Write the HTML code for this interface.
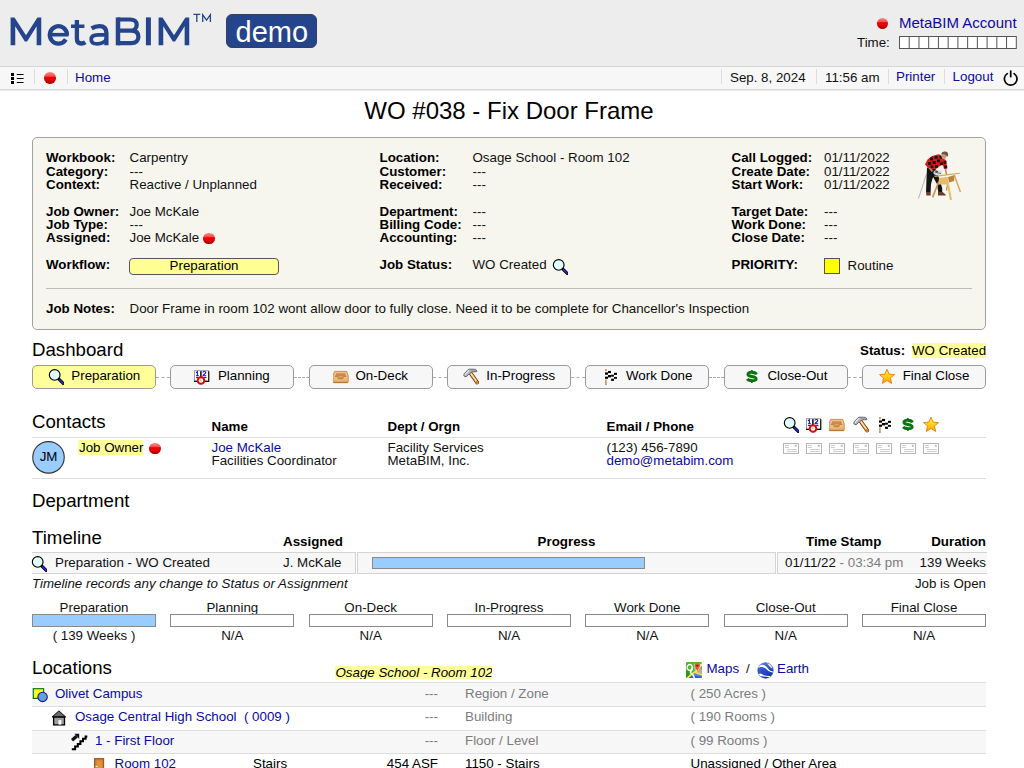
<!DOCTYPE html>
<html>
<head>
<meta charset="utf-8">
<title>WO #038 - Fix Door Frame</title>
<style>
html,body{margin:0;padding:0;background:#fff;}
body{width:1024px;height:768px;overflow:hidden;position:relative;font-family:"Liberation Sans",sans-serif;font-size:13.33px;color:#111;}
.t{position:absolute;white-space:nowrap;line-height:15px;font-size:13.33px;}
.b{font-weight:bold;color:#000;}
.a{color:#0a0aa2;}
.g{color:#7c7c7c;}
.h{position:absolute;white-space:nowrap;line-height:22px;font-size:18.67px;color:#000;left:32px;}
.abs{position:absolute;}
.ball{position:absolute;width:11.6px;height:11.6px;border-radius:50%;background:linear-gradient(#f78a8a 0%,#f74a4a 36%,#f20000 42%,#dd0000 65%,#a80000 100%);}
.sep{position:absolute;width:1px;height:15px;top:69px;background:#dcdcdc;}
.hl{background:#ffff99;}
.btn{position:absolute;top:365px;width:122px;height:22px;border:1px solid #9a9a9a;border-radius:5px;background:#f7f7f7;display:flex;align-items:center;justify-content:center;font-size:13.33px;line-height:15px;color:#000;}
.btn svg{margin-right:8.5px;flex:none;}
.btn span{position:relative;top:-2px;}
.dash{position:absolute;top:377px;height:0;border-top:1px dashed #aaa;}
.bar{position:absolute;top:614px;width:122px;height:11px;border:1px solid #8a8a8a;background:#fff;}
.ctr{position:absolute;white-space:nowrap;line-height:15px;font-size:13.33px;width:124px;text-align:center;}
.ln{position:absolute;left:32px;width:954px;height:1px;background:#ddd;}
</style>
</head>
<body>
<svg width="0" height="0" style="position:absolute">
<defs>
<linearGradient id="gPole" gradientUnits="userSpaceOnUse" x1="0" y1="11.3" x2="0" y2="16.9"><stop offset="0" stop-color="#eaa060"/><stop offset=".4" stop-color="#c8a078"/><stop offset="1" stop-color="#a8a098"/></linearGradient>
<linearGradient id="gStar" x1="0" y1="0" x2="0" y2="1"><stop offset="0" stop-color="#fff23a"/><stop offset=".5" stop-color="#ffd21a"/><stop offset="1" stop-color="#ff9a10"/></linearGradient>
<linearGradient id="gTray" x1="0" y1="0" x2="0" y2="1"><stop offset="0" stop-color="#ecb878"/><stop offset=".2" stop-color="#f3c88e"/><stop offset=".55" stop-color="#efc086"/><stop offset="1" stop-color="#e2a866"/></linearGradient>
<linearGradient id="gHandle" gradientUnits="userSpaceOnUse" x1="10.04" y1="10.9" x2="12.16" y2="9.4"><stop offset="0" stop-color="#e88c24"/><stop offset=".5" stop-color="#fff0c4"/><stop offset="1" stop-color="#ee9a30"/></linearGradient>
<linearGradient id="gEarth" x1="0.3" y1="0" x2="0.7" y2="1"><stop offset="0" stop-color="#5a78dc"/><stop offset=".45" stop-color="#2c50cc"/><stop offset="1" stop-color="#142ca4"/></linearGradient>
<symbol id="i-mag" viewBox="0 0 16 17"><g transform="translate(0 0.4)"><path d="M10.9 10.7L15.2 15" stroke="#000" stroke-width="3" stroke-linecap="round"/><path d="M11.6 11.4L15.1 14.9" stroke="#2a2aff" stroke-width="1.3" stroke-linecap="round"/><circle cx="6.7" cy="6.5" r="5.35" fill="#e2ffff" stroke="#000" stroke-width="1.15"/></g></symbol>
<symbol id="i-plan" viewBox="0 0 16 17"><g transform="translate(0 1.2)"><rect x="0.5" y="1.5" width="6" height="10.5" fill="#fff" stroke="#9a9a9a" stroke-width="1"/><rect x="7.5" y="1.5" width="7" height="10.5" fill="#fff" stroke="#9a9a9a" stroke-width="1"/><path d="M0 12.2H15M6.8 2V12.5M14.8 2V12.5" stroke="#000" stroke-width="1.1" fill="none"/><path d="M2 3.6L3.4 2.4V6.6M2 6.6H4.9" stroke="#1010ff" stroke-width="1.1" fill="none"/><path d="M9 3.4C9 2 11.8 2 11.8 3.4C11.8 4.6 9 5.4 9 6.6H12.2" stroke="#1010ff" stroke-width="1.1" fill="none"/><path d="M2 8.4H5M9.5 8.4H12.5" stroke="#222" stroke-width="1" fill="none"/><circle cx="7" cy="11.3" r="3.3" fill="#fff" stroke="#e60000" stroke-width="1.9"/><path d="M7 11.6L6 10.2" stroke="#888" stroke-width="1" fill="none"/></g></symbol>
<symbol id="i-tray" viewBox="0 0 16 17"><g transform="translate(0 0.5)"><path d="M1.5 2.9H13.7L15.2 7.3V13.3C15.2 13.9 14.8 14.2 14.2 14.2H1C0.4 14.2 0 13.9 0 13.3V7.3Z" fill="url(#gTray)" stroke="#c58a48" stroke-width="0.9"/><path d="M0.3 13.9H14.9" stroke="#b06e2c" stroke-width="0.9"/><path d="M3 4.7H12.2L13 7.8H2.2Z" fill="#c48c54"/><path d="M4.6 7.8L5.5 10H9.7L10.6 7.8Z" fill="#d09a60"/><path d="M1.8 7.9H4.5L5.4 10.1H9.8L10.7 7.9H13.4" fill="none" stroke="#b87830" stroke-width="0.9"/></g></symbol>
<symbol id="i-ham" viewBox="0 0 16 17"><path d="M7.9 5.6L14.1 14.4" stroke="#5c2e0a" stroke-width="3.8" stroke-linecap="round"/><path d="M8 5.8L14.1 14.4" stroke="url(#gHandle)" stroke-width="2.5" stroke-linecap="round"/><circle cx="14" cy="14.3" r="1.25" fill="#e6761a"/><path d="M0.8 7.4L1.1 5.7L4.5 2.3L5.95 1.15L12.5 1.3L14 3.2L13.7 3.75H9.1L7.95 4.7L6.25 6.3L5.1 6.6L3.65 8.6L1.8 8.7Z" fill="#b4b4b9" stroke="#4c4c50" stroke-width="0.8" stroke-linejoin="round"/><path d="M1.9 6.7L5 3.4L6.4 2.3" stroke="#ececf2" stroke-width="1.1" fill="none"/><path d="M6.5 2H12" stroke="#8a8a90" stroke-width="0.8" fill="none"/></symbol>
<symbol id="i-flag" viewBox="0 0 16 17"><path d="M3.92 0.9V3.4" stroke="#c9a070" stroke-width="1.8"/><path d="M3.92 11.3V16.9" stroke="url(#gPole)" stroke-width="1.8"/><path d="M3 3.6L6 3.2V1.9H9V3.6L12 3.8H15V13.3H9.1V11.7H6V11H3Z" fill="#fff"/><g fill="#000"><rect x="3.00" y="4.40" width="3.00" height="2.30"/><rect x="3.00" y="8.65" width="3.00" height="2.15"/><rect x="6.00" y="2.90" width="3.00" height="2.20"/><rect x="6.00" y="7.00" width="3.00" height="2.40"/><rect x="9.10" y="6.70" width="2.80" height="2.00"/><rect x="9.10" y="10.70" width="2.80" height="2.20"/><rect x="12.00" y="4.80" width="2.95" height="2.10"/><rect x="12.00" y="8.90" width="2.95" height="1.90"/></g></symbol>
<symbol id="i-dol" viewBox="0 0 16 17"><g transform="translate(-0.3 0) scale(0.95 1)"><path d="M8.6 1.9V3.4M8.6 13.5V15" stroke="#148018" stroke-width="1.8" fill="none"/><path d="M13.3 6.5C12.8 5 11 4.4 8.6 4.4C6.1 4.4 4.5 5.2 4.5 6.5C4.5 7.7 5.7 8.1 8.6 8.5C11.9 9 13.1 9.7 13.1 10.9C13.1 12 11.3 12.5 8.6 12.5C6.3 12.5 4.5 11.9 3.7 10.8" stroke="#0f7212" stroke-width="3.1" fill="none"/><path d="M6 6.3C6.6 5.6 7.6 5.5 8.6 5.5M8.4 11.4C10 11.5 11.4 11.3 11.8 10.8" stroke="#36b836" stroke-width="0.9" fill="none"/></g></symbol>
<symbol id="i-star" viewBox="0 0 16 17"><g transform="translate(0 0.5)"><path d="M8 0.7L10.1 5.6L15.5 6.1L11.4 9.6L12.7 14.9L8 12.1L3.3 14.9L4.6 9.6L0.5 6.1L5.9 5.6Z" fill="url(#gStar)" stroke="#f37c0a" stroke-width="0.9" stroke-linejoin="round"/></g></symbol>
<symbol id="i-env" viewBox="0 0 16 11"><rect x="0.5" y="0.5" width="15" height="10" fill="#fff" stroke="#b6b6b6" stroke-width="1"/><path d="M1.9 2.5H5.9M1.9 4.5H5.9M4 6.5H13.8M4 8.5H13.8" stroke="#c2c2c2" stroke-width="0.8" fill="none"/><rect x="11.8" y="1.8" width="2" height="2" fill="#ecaaaa"/></symbol>
<symbol id="i-campus" viewBox="0 0 17 16"><rect x="1.3" y="1.7" width="10.3" height="9.7" fill="#ffff1a" stroke="#0a7a0a" stroke-width="1.2"/><circle cx="10.6" cy="9.9" r="4.7" fill="#6a9fd4" stroke="#1414b4" stroke-width="1.1"/></symbol>
<symbol id="i-house" viewBox="0 0 16 17"><path d="M7.9 0.9L14.7 7H1.1Z" fill="#6a6a6a" stroke="#000" stroke-width="1" stroke-linejoin="round"/><rect x="2.6" y="7.1" width="10.9" height="7.8" fill="#9c9c9c" stroke="#000" stroke-width="1.3"/><rect x="7.5" y="10.2" width="2.8" height="4.4" fill="#fff"/></symbol>
<symbol id="i-stairs" viewBox="0 0 17 18"><path d="M0.8 16.2H4.1V13.5H6.8V10.9H9.4V8.3H12V5.7H14.6V3.5H16.3" fill="none" stroke="#000" stroke-width="2.05"/><path d="M1 7.2L5.6 3.2" stroke="#111" stroke-width="3.3"/><path d="M3.4 0.8H8.2V5.9Z" fill="#111"/></symbol>
<symbol id="i-door" viewBox="0 0 16 16"><rect x="2.6" y="1.6" width="9" height="15" fill="#d07a2c" stroke="#a5561c" stroke-width="1.1"/><rect x="4.6" y="3.4" width="5.2" height="12" fill="#e2923e"/><rect x="3.6" y="8.8" width="1.7" height="1.3" fill="#fff"/></symbol>
<symbol id="i-maps" viewBox="0 0 16 16"><clipPath id="cMaps"><rect width="16" height="16" rx="1.2"/></clipPath><g clip-path="url(#cMaps)"><rect width="16" height="16" fill="#56b430"/><path d="M0 8.6H3.4V16H0Z" fill="#2e9812"/><path d="M7.6 1.8H16V12.6L9 10.4Z" fill="#9ad868"/><path d="M9.8 10.2L13 6L16 3.2V12.8Z" fill="#c2aa8a"/><path d="M13.6 5.4L16 3.2V8Z" fill="#a08868"/><path d="M8.4 10.3L15.2 1.6L16 2V3.6L9.6 11Z" fill="#eef2a4"/><path d="M3.2 16L8.4 11.2L16 14V16Z" fill="#2c5cd0"/><path d="M6 13.5L8.4 11.2L16 14V14.8Z" fill="#5c88e4"/><path d="M1 16.2L8.4 10.1L16.2 13" stroke="#f2de4c" stroke-width="1.7" fill="none"/><ellipse cx="3.7" cy="5.4" rx="2.5" ry="2.9" fill="#52b42c" stroke="#fff" stroke-width="1.3"/><path d="M6.4 4.6C6.9 7.6 5.9 8.8 4.4 9.9C4.2 11 5.6 11.6 6.6 12.6C7.6 13.6 8.1 15 8.4 16.3" stroke="#fff" stroke-width="1.5" fill="none"/><path d="M11.4 1.3C13 1.3 14 2.5 14 3.8C14 5.3 12.1 6.4 11.3 9.3C10.6 6.4 8.8 5.3 8.8 3.8C8.8 2.5 9.8 1.3 11.4 1.3Z" fill="#e94b40"/><circle cx="11.3" cy="3.6" r="0.9" fill="#6a1410"/></g></symbol>
<symbol id="i-earth" viewBox="0 0 17 17"><clipPath id="cEarth"><circle cx="8.5" cy="8.5" r="7.9"/></clipPath><circle cx="8.5" cy="8.5" r="7.9" fill="url(#gEarth)"/><g clip-path="url(#cEarth)"><path d="M0.5 4.4L1.8 3.65C3.4 2.9 4.6 2.6 5.85 2.7C7 2.9 8 3.4 9 4.3C10.2 5.5 11 6.7 12.1 7.7C13.2 8.7 14.5 9.2 16.5 9.7V10.7C14.5 10.3 12.8 9.8 11.5 9C10.2 8 9.3 6.9 8.35 6.15C7.4 5.4 6.3 5 5.2 4.9C3.8 4.8 2.5 5.1 0.5 5.8Z" fill="#fff"/><path d="M9.9 1.15C11 1.3 12 1.6 12.7 2.1C13.8 3 14.7 4 15.2 5.2L15.5 6.8C14.9 6.2 14.2 5.7 13.35 5.2C12.6 4.3 11.8 3.3 10.85 2.4Z" fill="#f6f2e6" opacity=".92"/><path d="M0.5 11.9L3.65 11.5C4.9 11.9 5.8 12.7 6.8 13.35C9 13.9 11.5 14 14.5 13.9L12.7 15C10.5 15.1 8.5 14.9 6.45 14.6C5 14.5 3.8 14.3 2.7 14L0.5 13.5Z" fill="#fbf8f0"/></g><circle cx="8.5" cy="8.5" r="7.9" fill="none" stroke="#3a54b8" stroke-width="0.5" opacity=".6"/></symbol>
</defs>
</svg>

<!-- HEADER -->
<div class="abs" style="left:0;top:0;width:1024px;height:66px;background:#ededed;"></div>
<div class="abs" style="left:0;top:66px;width:1024px;height:1px;background:#d4d4d4;"></div>
<div class="abs" style="left:0;top:67px;width:1024px;height:22px;background:#f7f7f7;"></div>
<div class="abs" style="left:0;top:89px;width:1024px;height:1px;background:#d6d6d6;"></div><div class="abs" style="left:0;top:90px;width:1024px;height:1px;background:#f0f0f0;"></div>

<!-- logo -->
<svg class="abs" id="logo" style="left:0;top:0" width="220" height="60" viewBox="0 0 220 60">
<g fill="#24448b">
<path id="lgM" d="M10.6 45.3V17.4H14.5L26 35.3L37.4 17.4H41.25V45.3H36.65V26.2L27.1 41.6H24.85L15.25 26.2V45.3Z"/>
<use href="#lgM" x="148"/>
<rect x="71" y="24.5" width="13.4" height="3.5"/>
<rect x="145.9" y="17.4" width="5" height="27.9"/>
</g>
<g fill="none" stroke="#24448b" stroke-width="4.2" stroke-linejoin="miter">
<path d="M67 35A8.6 8.75 0 1 0 65.8 39.4" /><path d="M49.8 34.7H68.6" stroke-width="3.6"/>
<path d="M76.9 19.9V38.8C76.9 42.2 78.7 43.5 81.4 43.5C82.9 43.5 84.2 43.1 85.3 42.3" stroke-width="4.3"/>
<path d="M91.6 28.4C94 26.8 96.8 26.1 99.4 26.1C103.9 26.1 106.4 28.5 106.4 33V45.3" stroke-width="4.3"/>
<path d="M106.4 34.9H98C93.4 34.9 91.2 36.7 91.2 39.5C91.2 42.3 93.5 43.9 97.3 43.9C101.5 43.9 104.8 42 106.4 39.2" stroke-width="3.7"/>
<path d="M118 17.4V45.3" stroke-width="4.5"/>
<path d="M118 19.5H130.2C134.3 19.5 136.7 21.6 136.7 24.9C136.7 28.2 134.3 30.6 130.2 30.6H118M118 30.6H131.2C135.9 30.6 138.4 32.8 138.4 36.7C138.4 40.6 135.9 43.2 131.2 43.2H118" stroke-width="4.2"/>
</g>
<g fill="none" stroke="#24448b" stroke-width="1.3">
<path d="M193.4 14.3H200.25M196.8 14.3V22M202.7 22V14.7L206.55 20.2L210.4 14.7V22"/>
</g>
</svg>
<div class="abs" style="left:226px;top:14px;width:89px;height:32px;border:1px solid #3b3f55;border-radius:6px;background:#24448b;"></div>
<div class="t" style="left:235.5px;top:13.5px;font-size:29px;line-height:36px;color:#fff;">demo</div>

<div class="ball" style="left:876.6px;top:17.5px;"></div>
<div class="t a" style="left:899px;top:14px;font-size:15px;line-height:17px;">MetaBIM Account</div>
<div class="t" style="left:857px;top:35px;">Time:</div>
<svg class="abs" style="left:898px;top:35px" width="120" height="15" viewBox="0 0 120 15"><rect x="1.5" y="1.5" width="116.8" height="12" fill="#fff" stroke="#555" stroke-width="1"/><g stroke="#555" stroke-width="1"><path d="M11.23 1.5v12M20.97 1.5v12M30.70 1.5v12M40.43 1.5v12M50.17 1.5v12M59.90 1.5v12M69.63 1.5v12M79.36 1.5v12M89.10 1.5v12M98.83 1.5v12M108.56 1.5v12"/></g></svg>

<!-- NAV -->
<svg class="abs" style="left:9px;top:71px" width="17" height="15" viewBox="0 0 17 15"><g fill="#000"><rect x="2" y="2" width="3" height="3"/><rect x="2" y="6" width="3" height="3"/><rect x="2" y="10" width="3" height="3"/><rect x="7.8" y="3" width="6.8" height="1"/><rect x="7.8" y="7" width="6.8" height="1"/><rect x="7.8" y="11" width="6.8" height="1"/></g></svg>
<div class="sep" style="left:34px;"></div>
<div class="ball" style="left:44px;top:72px;"></div>
<div class="sep" style="left:67px;"></div>
<div class="t a" style="left:75px;top:70px;">Home</div>
<div class="sep" style="left:721px;"></div>
<div class="t" style="left:730px;top:70px;">Sep. 8, 2024</div>
<div class="sep" style="left:816px;"></div>
<div class="t" style="left:825px;top:70px;">11:56 am</div>
<div class="sep" style="left:888px;"></div>
<div class="t a" style="left:896px;top:69px;">Printer</div>
<div class="sep" style="left:944px;"></div>
<div class="t a" style="left:952.6px;top:69px;">Logout</div>
<svg class="abs" style="left:1002px;top:69px" width="18" height="18" viewBox="0 0 18 18"><path d="M5.3 4.6 A6.3 6.3 0 1 0 12.1 4.6" fill="none" stroke="#000" stroke-width="1.7" stroke-linecap="round"/><path d="M8.7 1.4 V8.4" stroke="#000" stroke-width="1.7" stroke-linecap="butt"/></svg>

<!-- TITLE -->
<div class="t" style="left:32px;width:954px;text-align:center;top:97px;font-size:24px;line-height:28px;color:#000;">WO #038 - Fix Door Frame</div>

<!-- INFO BOX -->
<div class="abs" style="left:32px;top:137px;width:952px;height:191px;border:1px solid #a2a2a2;border-radius:5px;background:#f7f6ee;"></div>
<div class="abs" style="left:46px;top:288px;width:926px;height:1px;background:#bcbcb8;"></div>

<div class="t b" style="left:46px;top:150px;">Workbook:</div><div class="t" style="left:129.5px;top:150px;">Carpentry</div>
<div class="t b" style="left:46px;top:164px;">Category:</div><div class="t" style="left:129.5px;top:164px;">---</div>
<div class="t b" style="left:46px;top:177px;">Context:</div><div class="t" style="left:129.5px;top:177px;">Reactive / Unplanned</div>
<div class="t b" style="left:46px;top:204px;">Job Owner:</div><div class="t" style="left:129.5px;top:204px;">Joe McKale</div>
<div class="t b" style="left:46px;top:217px;">Job Type:</div><div class="t" style="left:129.5px;top:217px;">---</div>
<div class="t b" style="left:46px;top:230px;">Assigned:</div><div class="t" style="left:129.5px;top:230px;">Joe McKale</div>
<div class="ball" style="left:203.2px;top:232.9px;"></div>
<div class="t b" style="left:46px;top:257px;">Workflow:</div>
<div class="abs" style="left:129px;top:258px;width:148px;height:15px;border:1px solid #555;border-radius:4px;background:#ffff94;"></div>
<div class="t" style="left:129px;width:150px;text-align:center;top:258px;color:#000;">Preparation</div>
<div class="t b" style="left:46px;top:301px;">Job Notes:</div><div class="t" style="left:129.5px;top:301px;">Door Frame in room 102 wont allow door to fully close. Need it to be complete for Chancellor's Inspection</div>

<div class="t b" style="left:379.5px;top:150px;">Location:</div><div class="t" style="left:472.5px;top:150px;">Osage School - Room 102</div>
<div class="t b" style="left:379.5px;top:164px;">Customer:</div><div class="t" style="left:472.5px;top:164px;">---</div>
<div class="t b" style="left:379.5px;top:177px;">Received:</div><div class="t" style="left:472.5px;top:177px;">---</div>
<div class="t b" style="left:379.5px;top:204px;">Department:</div><div class="t" style="left:472.5px;top:204px;">---</div>
<div class="t b" style="left:379.5px;top:217px;">Billing Code:</div><div class="t" style="left:472.5px;top:217px;">---</div>
<div class="t b" style="left:379.5px;top:230px;">Accounting:</div><div class="t" style="left:472.5px;top:230px;">---</div>
<div class="t b" style="left:379.5px;top:257px;">Job Status:</div><div class="t" style="left:472.5px;top:257px;">WO Created</div>
<svg class="abs" style="left:552.2px;top:257.5px" width="16" height="17"><use href="#i-mag"/></svg>

<div class="t b" style="left:731.5px;top:150px;">Call Logged:</div><div class="t" style="left:824px;top:150px;">01/11/2022</div>
<div class="t b" style="left:731.5px;top:164px;">Create Date:</div><div class="t" style="left:824px;top:164px;">01/11/2022</div>
<div class="t b" style="left:731.5px;top:177px;">Start Work:</div><div class="t" style="left:824px;top:177px;">01/11/2022</div>
<div class="t b" style="left:731.5px;top:204px;">Target Date:</div><div class="t" style="left:824px;top:204px;">---</div>
<div class="t b" style="left:731.5px;top:217px;">Work Done:</div><div class="t" style="left:824px;top:217px;">---</div>
<div class="t b" style="left:731.5px;top:230px;">Close Date:</div><div class="t" style="left:824px;top:230px;">---</div>
<div class="t b" style="left:731.5px;top:257px;">PRIORITY:</div>
<div class="abs" style="left:824px;top:258px;width:14px;height:14px;border:1px solid #555;background:#ffff00;"></div>
<div class="t" style="left:847.5px;top:258px;">Routine</div>


<svg class="abs" style="left:908px;top:144px" width="64" height="64" viewBox="0 0 64 64">
<path d="M18.5 30L10.5 54.5" stroke="#9a9a9a" stroke-width="0.7" fill="none"/>
<path d="M19 23.5L27.5 25L29 29L31 34L34.2 44V48.3H30.3L29 40L25 33L23 40L22.6 48.3H18L18.5 35Z" fill="#141414"/>
<path d="M18 48H22.6V51.5H18.4Z" fill="#6a3a2a"/><path d="M30 48H34.5L37.6 50.4V51.6H30Z" fill="#6a3a2a"/>
<path d="M46.3 31L52.4 48" stroke="#d9a560" stroke-width="1.5"/>
<path d="M39.6 40L38.5 46.5" stroke="#b98545" stroke-width="1.3"/>
<path d="M40 33L46.2 31.2V37L41 38.5Z" fill="#b5853f"/>
<path d="M31 34L39 33L40.5 40.6H30Z" fill="#e6bc6c"/>
<path d="M30.6 38L24.6 53.4" stroke="#cf9850" stroke-width="1.7"/>
<path d="M38.6 33L43 56" stroke="#e9ba66" stroke-width="2"/>
<path d="M26 31.8L51.6 28.7L52 29.7L27 33.1Z" fill="#d8a45e"/>
<ellipse cx="29.8" cy="28.6" rx="4.4" ry="2.7" fill="#dcdcdc"/><path d="M26.5 28L33 29.6" stroke="#555" stroke-width="0.8"/><circle cx="28.6" cy="27.6" r="1.2" fill="#444"/>
<path d="M20 22.5L24.5 27.3" stroke="#c48f6c" stroke-width="1.8"/>
<path d="M37.3 24.5L38.6 30.6" stroke="#c48f6c" stroke-width="1.6"/>
<path d="M17 20.5L19.5 15.5L24 12L30.5 10.3L33 11L35 14.5L38 16L39.2 24.4L36 25L34.5 19.5L32 22L27.5 25.2L20 23.8Z" fill="#d61a1a"/>
<g fill="#2a0c0c"><rect x="22" y="13.5" width="3.1" height="2.8" /><rect x="26.5" y="12" width="3.1" height="2.8"/><rect x="20" y="18" width="3.1" height="2.8"/><rect x="24.5" y="17" width="3.3" height="3.0"/><rect x="29" y="15.5" width="3.1" height="2.8"/><rect x="27" y="21" width="3.1" height="2.8"/><rect x="32" y="18.5" width="2.9" height="2.8"/><rect x="35.5" y="17" width="2.9" height="2.8"/><rect x="36.3" y="21.5" width="2.9" height="2.8"/><rect x="22.5" y="21.5" width="2.9" height="2.6"/><rect x="31.5" y="12" width="2.7" height="2.6"/></g>
<ellipse cx="36" cy="12.2" rx="2.4" ry="2.6" fill="#c99a78"/>
<path d="M33.2 10.6C33.4 8 35.6 7.2 37.6 7.6C39.8 8 40.6 10 40 12C39 13.4 38.4 11.6 37 10.6C35.8 10 34.4 10.4 33.2 10.6Z" fill="#6b5446"/>
</svg>

<!-- DASHBOARD -->
<div class="h" style="top:339px;">Dashboard</div>
<div class="t b" style="left:860px;top:342.5px;">Status:</div>
<div class="t" style="left:912px;top:342.5px;color:#000;"><span class="hl">WO Created</span></div>

<div class="btn" style="left:32.00px;background:#ffff99;"></div><svg class="abs" style="left:47.5px;top:368px" width="16" height="17"><use href="#i-mag"/></svg><div class="t" style="left:71.3px;top:368px;color:#000;">Preparation</div>
<div class="dash" style="left:156.00px;width:14.3px;"></div>
<div class="btn" style="left:170.33px;"></div><svg class="abs" style="left:194px;top:368px" width="16" height="17"><use href="#i-plan"/></svg><div class="t" style="left:217.9px;top:368px;color:#000;">Planning</div>
<div class="dash" style="left:294.33px;width:14.3px;"></div>
<div class="btn" style="left:308.67px;"></div><svg class="abs" style="left:333px;top:368px" width="16" height="17"><use href="#i-tray"/></svg><div class="t" style="left:355.4px;top:368px;color:#000;">On-Deck</div>
<div class="dash" style="left:432.67px;width:14.3px;"></div>
<div class="btn" style="left:447.00px;"></div><svg class="abs" style="left:462.5px;top:368px" width="16" height="17"><use href="#i-ham"/></svg><div class="t" style="left:486.3px;top:368px;color:#000;">In-Progress</div>
<div class="dash" style="left:571.00px;width:14.3px;"></div>
<div class="btn" style="left:585.33px;"></div><svg class="abs" style="left:602px;top:368px" width="16" height="17"><use href="#i-flag"/></svg><div class="t" style="left:626px;top:368px;color:#000;">Work Done</div>
<div class="dash" style="left:709.33px;width:14.3px;"></div>
<div class="btn" style="left:723.66px;"></div><svg class="abs" style="left:744px;top:368px" width="16" height="17"><use href="#i-dol"/></svg><div class="t" style="left:767.4px;top:368px;color:#000;">Close-Out</div>
<div class="dash" style="left:847.66px;width:14.3px;"></div>
<div class="btn" style="left:862.00px;"></div><svg class="abs" style="left:879px;top:368px" width="16" height="17"><use href="#i-star"/></svg><div class="t" style="left:902.7px;top:368px;color:#000;">Final Close</div>

<!-- CONTACTS -->
<div class="h" style="top:411px;">Contacts</div>
<div class="t b" style="left:211.5px;top:418.5px;">Name</div>
<div class="t b" style="left:387.5px;top:418.5px;">Dept / Orgn</div>
<div class="t b" style="left:606.5px;top:418.5px;">Email / Phone</div>
<svg class="abs" style="left:782.5px;top:416px" width="16" height="17"><use href="#i-mag"/></svg>
<svg class="abs" style="left:806px;top:416px" width="16" height="17"><use href="#i-plan"/></svg>
<svg class="abs" style="left:829px;top:416px" width="16" height="17"><use href="#i-tray"/></svg>
<svg class="abs" style="left:853px;top:416px" width="16" height="17"><use href="#i-ham"/></svg>
<svg class="abs" style="left:875.8px;top:416px" width="16" height="17"><use href="#i-flag"/></svg>
<svg class="abs" style="left:900px;top:416px" width="16" height="17"><use href="#i-dol"/></svg>
<svg class="abs" style="left:923px;top:416px" width="16" height="17"><use href="#i-star"/></svg>
<div class="ln" style="top:437px;"></div>
<svg class="abs" style="left:30px;top:439px" width="38" height="38"><circle cx="18.5" cy="18.35" r="15.75" fill="#99ccff" stroke="#333" stroke-width="1.1"/></svg>
<div class="t" style="left:32.6px;top:449px;width:32px;text-align:center;color:#000;">JM</div>
<div class="t" style="left:78px;top:439.5px;color:#000;"><span class="hl" style="padding:0 0 0 1px;">Job Owner</span></div>
<div class="ball" style="left:149.2px;top:442.9px;"></div>
<div class="t a" style="left:211.5px;top:440px;">Joe McKale</div>
<div class="t" style="left:211.5px;top:453px;">Facilities Coordinator</div>
<div class="t" style="left:387.5px;top:440px;">Facility Services</div>
<div class="t" style="left:387.5px;top:453px;">MetaBIM, Inc.</div>
<div class="t" style="left:606.5px;top:440px;">(123) 456-7890</div>
<div class="t a" style="left:606.5px;top:453px;">demo@metabim.com</div>
<svg class="abs" style="left:783.2px;top:443.2px" width="16" height="11"><use href="#i-env"/></svg>
<svg class="abs" style="left:806.2px;top:443.2px" width="16" height="11"><use href="#i-env"/></svg>
<svg class="abs" style="left:829.2px;top:443.2px" width="16" height="11"><use href="#i-env"/></svg>
<svg class="abs" style="left:853.2px;top:443.2px" width="16" height="11"><use href="#i-env"/></svg>
<svg class="abs" style="left:876.2px;top:443.2px" width="16" height="11"><use href="#i-env"/></svg>
<svg class="abs" style="left:900.2px;top:443.2px" width="16" height="11"><use href="#i-env"/></svg>
<svg class="abs" style="left:923.2px;top:443.2px" width="16" height="11"><use href="#i-env"/></svg>
<div class="ln" style="top:478px;"></div>

<!-- DEPARTMENT / TIMELINE -->
<div class="h" style="top:490px;">Department</div>
<div class="h" style="top:527px;">Timeline</div>
<div class="t b" style="left:283px;top:534px;">Assigned</div>
<div class="t b" style="left:357px;width:419px;text-align:center;top:534px;">Progress</div>
<div class="t b" style="left:806px;top:534px;">Time Stamp</div>
<div class="t b" style="left:886px;width:100px;text-align:right;top:534px;">Duration</div>
<div class="abs" style="left:32px;top:552px;width:323px;height:20px;border:1px solid #d4d4d4;border-left:none;background:#f7f7f7;"></div>
<div class="abs" style="left:357px;top:552px;width:417px;height:20px;border:1px solid #d4d4d4;background:#f7f7f7;"></div>
<div class="abs" style="left:777px;top:552px;width:209px;height:20px;border:1px solid #d4d4d4;border-right:none;background:#f7f7f7;"></div>
<svg class="abs" style="left:31.2px;top:555.4px" width="16" height="17"><use href="#i-mag"/></svg>
<div class="t" style="left:55px;top:555px;">Preparation - WO Created</div>
<div class="t" style="left:283px;top:555px;">J. McKale</div>
<div class="abs" style="left:372px;top:557px;width:271px;height:10px;border:1px solid #8a8a8a;background:#99ccff;"></div>
<div class="t" style="left:785px;top:555px;">01/11/22 <span class="g">- 03:34 pm</span></div>
<div class="t" style="left:886px;width:100px;text-align:right;top:555px;">139 Weeks</div>
<div class="t" style="left:32px;top:576px;font-style:italic;">Timeline records any change to Status or Assignment</div>
<div class="t" style="left:886px;width:100px;text-align:right;top:576px;">Job is Open</div>

<div class="ctr" style="left:32px;top:599.5px;">Preparation</div>
<div class="ctr" style="left:170.33px;top:599.5px;">Planning</div>
<div class="ctr" style="left:308.67px;top:599.5px;">On-Deck</div>
<div class="ctr" style="left:447px;top:599.5px;">In-Progress</div>
<div class="ctr" style="left:585.33px;top:599.5px;">Work Done</div>
<div class="ctr" style="left:723.67px;top:599.5px;">Close-Out</div>
<div class="ctr" style="left:862px;top:599.5px;">Final Close</div>
<div class="bar" style="left:32px;background:#99ccff;"></div>
<div class="bar" style="left:170.33px;"></div>
<div class="bar" style="left:308.67px;"></div>
<div class="bar" style="left:447px;"></div>
<div class="bar" style="left:585.33px;"></div>
<div class="bar" style="left:723.67px;"></div>
<div class="bar" style="left:862px;"></div>
<div class="ctr" style="left:32px;top:628px;">( 139 Weeks )</div>
<div class="ctr" style="left:170.33px;top:628px;">N/A</div>
<div class="ctr" style="left:308.67px;top:628px;">N/A</div>
<div class="ctr" style="left:447px;top:628px;">N/A</div>
<div class="ctr" style="left:585.33px;top:628px;">N/A</div>
<div class="ctr" style="left:723.67px;top:628px;">N/A</div>
<div class="ctr" style="left:862px;top:628px;">N/A</div>

<!-- LOCATIONS -->
<div class="h" style="top:656.5px;">Locations</div>
<div class="abs" style="left:335px;top:666.3px;width:157px;height:12.5px;background:#ffff99;overflow:hidden;"><div class="t" style="left:0.5px;top:-1.5px;font-style:italic;color:#000;">Osage School - Room 102</div></div>
<svg class="abs" style="left:686px;top:662px" width="16" height="16"><use href="#i-maps"/></svg>
<div class="t a" style="left:706.5px;top:661px;">Maps</div>
<div class="t" style="left:746px;top:661px;">/</div>
<svg class="abs" style="left:756.5px;top:661.6px" width="17" height="17"><use href="#i-earth"/></svg>
<div class="t a" style="left:777px;top:661px;">Earth</div>

<div class="abs" style="left:32px;top:683px;width:954px;height:23px;background:#f7f7f7;"></div>
<div class="abs" style="left:32px;top:731px;width:954px;height:22px;background:#f7f7f7;"></div>
<div class="ln" style="top:682px;"></div>
<div class="ln" style="top:706px;"></div>
<div class="ln" style="top:730px;"></div>
<div class="ln" style="top:753px;"></div>

<svg class="abs" style="left:32px;top:687px" width="17" height="16"><use href="#i-campus"/></svg>
<div class="t a" style="left:55px;top:685.5px;">Olivet Campus</div>
<div class="t g" style="left:338px;width:100px;text-align:right;top:685.5px;">---</div>
<div class="t g" style="left:465px;top:685.5px;">Region / Zone</div>
<div class="t g" style="left:690.5px;top:685.5px;">( 250 Acres )</div>

<svg class="abs" style="left:51px;top:709.5px" width="16" height="17"><use href="#i-house"/></svg>
<div class="t a" style="left:75px;top:709px;white-space:pre;">Osage Central High School  ( 0009 )</div>
<div class="t g" style="left:338px;width:100px;text-align:right;top:709px;">---</div>
<div class="t g" style="left:465px;top:709px;">Building</div>
<div class="t g" style="left:690.5px;top:709px;">( 190 Rooms )</div>

<svg class="abs" style="left:71px;top:733px" width="17" height="18"><use href="#i-stairs"/></svg>
<div class="t a" style="left:95px;top:733px;">1 - First Floor</div>
<div class="t g" style="left:338px;width:100px;text-align:right;top:733px;">---</div>
<div class="t g" style="left:465px;top:733px;">Floor / Level</div>
<div class="t g" style="left:690.5px;top:733px;">( 99 Rooms )</div>

<svg class="abs" style="left:92px;top:757px" width="16" height="16"><use href="#i-door"/></svg>
<div class="t a" style="left:114.5px;top:755.5px;">Room 102</div>
<div class="t" style="left:253px;top:755.5px;color:#000;">Stairs</div>
<div class="t" style="left:338px;width:100px;text-align:right;top:755.5px;color:#000;">454 ASF</div>
<div class="t" style="left:465px;top:755.5px;color:#000;">1150 - Stairs</div>
<div class="t" style="left:690.5px;top:755.5px;color:#000;">Unassigned / Other Area</div>

<!--END-->

</body>
</html>
